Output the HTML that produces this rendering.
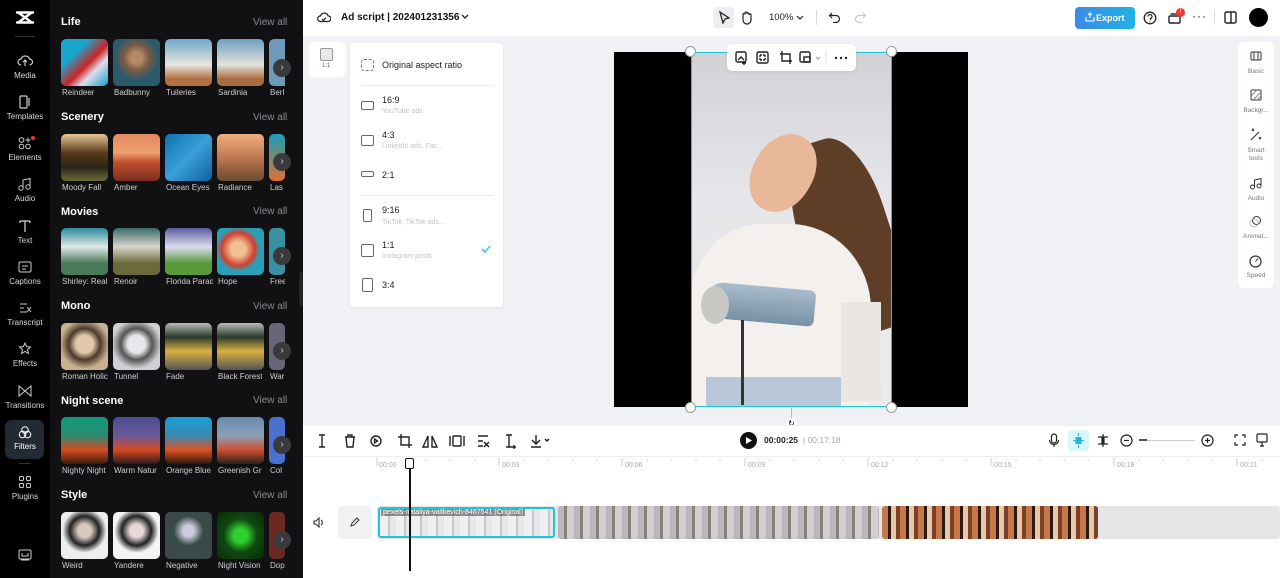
<!DOCTYPE html>
<html><head><meta charset="utf-8"><style>
*{box-sizing:border-box;margin:0;padding:0}
body{width:1280px;height:578px;overflow:hidden;font-family:"Liberation Sans",sans-serif;background:#fff;position:relative}
.abs{position:absolute}
#rail{left:0;top:0;width:50px;height:578px;background:#000}
#panel{left:50px;top:0;width:253px;height:578px;background:#111114}
.ri{position:absolute;left:0;width:50px;text-align:center;color:#d8d8d8;font-size:8px}
.ri svg{display:block;margin:0 auto 3px}
.st{position:absolute;left:61px;color:#fff;font-weight:bold;font-size:11px}
.va{position:absolute;left:253px;color:#8a8a8e;font-size:10px}
.th{position:absolute;width:47px;height:47px;border-radius:5px;overflow:hidden}
.lb{position:absolute;color:#cfcfd2;font-size:8px;white-space:nowrap;overflow:hidden}
.ar{position:absolute;left:273px;width:18px;height:18px;border-radius:50%;background:#3a3a3e;color:#ccc;font-size:10px;text-align:center;line-height:18px}
#canvas{left:303px;top:36px;width:977px;height:389px;background:#eff1f4}
.ic{stroke:#222;fill:none;stroke-width:1.4}
.dd{position:absolute;left:360px;font-size:9px;color:#222}
.ds{position:absolute;left:382px;font-size:7px;color:#c4c4c8}
.bx{position:absolute;border:1.3px solid #666;border-radius:2px}
.tk{position:absolute;top:462px;font-size:7px;color:#aaa}
.rp{position:absolute;left:1238px;width:36px;text-align:center;font-size:6.5px;color:#777}
</style></head><body>
<div id="rail" class="abs"></div>
<div id="panel" class="abs"></div>
<!-- logo -->
<svg class="abs" style="left:15px;top:10px" width="20" height="16" viewBox="0 0 20 16"><path d="M2 2.5h16M2 12.5h16M4 3l12 9M16 3L4 12" stroke="#fff" stroke-width="2.4" fill="none" stroke-linecap="round"/></svg>
<div class="abs" style="left:15px;top:36px;width:20px;height:1px;background:#333"></div>
<div class="ri" style="top:54px"><svg width="16" height="14"><path d="M4 11a3 3 0 0 1 0-6 4.5 4.5 0 0 1 8.5 0 3 3 0 0 1 0 6M8 12V6M6 8l2-2 2 2" stroke="#ccc" fill="none" stroke-width="1.2"/></svg>Media</div>
<div class="ri" style="top:95px"><svg width="16" height="14"><rect x="3" y="1" width="7" height="12" rx="1" stroke="#ccc" fill="none" stroke-width="1.2"/><path d="M12 3v8" stroke="#ccc" stroke-width="1.2"/></svg>Templates</div>
<div class="ri" style="top:136px"><svg width="16" height="14"><circle cx="4.5" cy="4" r="2.3" stroke="#ccc" fill="none"/><circle cx="4.5" cy="10.5" r="2.3" stroke="#ccc" fill="none"/><circle cx="11" cy="10.5" r="2.3" stroke="#ccc" fill="none"/><path d="M11 1.5v5M8.5 4h5" stroke="#ccc"/></svg>Elements</div>
<div class="abs" style="left:31px;top:136px;width:4px;height:4px;border-radius:50%;background:#f33"></div>
<div class="ri" style="top:177px"><svg width="16" height="14"><circle cx="4" cy="11" r="2.2" stroke="#ccc" fill="none"/><circle cx="11" cy="10" r="2.2" stroke="#ccc" fill="none"/><path d="M6 11V3l7-1.5V10" stroke="#ccc" fill="none"/></svg>Audio</div>
<div class="ri" style="top:219px"><svg width="16" height="14"><path d="M3 2h10M8 2v11M3 2v2M13 2v2" stroke="#ccc" fill="none" stroke-width="1.3"/></svg>Text</div>
<div class="ri" style="top:260px"><svg width="16" height="14"><rect x="2" y="2" width="12" height="10" rx="1.5" stroke="#ccc" fill="none"/><path d="M5 6h6M5 9h4" stroke="#ccc"/></svg>Captions</div>
<div class="ri" style="top:301px"><svg width="16" height="14"><path d="M3 3h7M3 7h4M3 11h7M10 6l4 5M14 6l-4 5" stroke="#ccc" fill="none"/></svg>Transcript</div>
<div class="ri" style="top:342px"><svg width="16" height="14"><path d="M8 1l1.6 3.6 3.9.4-3 2.6.9 3.9L8 9.5 4.6 11.5l.9-3.9-3-2.6 3.9-.4z" stroke="#ccc" fill="none"/></svg>Effects</div>
<div class="ri" style="top:384px"><svg width="16" height="14"><path d="M2 2v10l12-10v10z" stroke="#ccc" fill="none"/></svg>Transitions</div>
<div class="abs" style="left:5px;top:420px;width:39px;height:39px;border-radius:7px;background:#222a33"></div>
<div class="ri" style="top:425px;color:#fff"><svg width="16" height="14"><circle cx="8" cy="5" r="3.3" stroke="#fff" fill="none"/><circle cx="5.5" cy="9.5" r="3.3" stroke="#fff" fill="none"/><circle cx="10.5" cy="9.5" r="3.3" stroke="#fff" fill="none"/></svg>Filters</div>
<div class="abs" style="left:19px;top:463px;width:12px;height:1px;background:#333"></div>
<div class="ri" style="top:475px"><svg width="16" height="14"><rect x="2.5" y="1.5" width="4" height="4" rx="1" stroke="#ccc" fill="none"/><rect x="9.5" y="1.5" width="4" height="4" rx="1" stroke="#ccc" fill="none"/><rect x="2.5" y="8.5" width="4" height="4" rx="1" stroke="#ccc" fill="none"/><rect x="9.5" y="8.5" width="4" height="4" rx="1" stroke="#ccc" fill="none"/></svg>Plugins</div>
<svg class="abs" style="left:18px;top:549px" width="14" height="12"><rect x="1" y="1" width="12" height="9" rx="1.5" stroke="#ccc" fill="none"/><path d="M4 4v3h6V4M3 11h8" stroke="#ccc" fill="none"/></svg>

<!-- sections -->
<div class="st" style="top:16px">Life</div><div class="va" style="top:17px">View all</div>
<div class="st" style="top:111px">Scenery</div><div class="va" style="top:112px">View all</div>
<div class="st" style="top:206px">Movies</div><div class="va" style="top:206px">View all</div>
<div class="st" style="top:300px">Mono</div><div class="va" style="top:301px">View all</div>
<div class="st" style="top:395px">Night scene</div><div class="va" style="top:395px">View all</div>
<div class="st" style="top:489px">Style</div><div class="va" style="top:490px">View all</div>

<!-- row 1 -->
<div class="th" style="left:61px;top:39px;background:linear-gradient(135deg,#1aa6cf 30%,#c22 55%,#dde 70%,#18a0c8)"></div>
<div class="th" style="left:113px;top:39px;background:radial-gradient(circle at 50% 40%,#b48a6a 15%,#7a5a44 35%,#2a5a6c 60%)"></div>
<div class="th" style="left:165px;top:39px;background:linear-gradient(180deg,#6fa8c8,#e8e6e0 55%,#b07040 85%)"></div>
<div class="th" style="left:217px;top:39px;background:linear-gradient(180deg,#6ea0c0,#e4e2dc 55%,#a86c40 85%)"></div>
<div class="th" style="left:269px;top:39px;width:16px;border-radius:5px 0 0 5px;background:#6e9ab8"></div>
<div class="lb" style="left:62px;top:88px">Reindeer</div><div class="lb" style="left:114px;top:88px">Badbunny</div><div class="lb" style="left:166px;top:88px">Tuileries</div><div class="lb" style="left:218px;top:88px">Sardinia</div><div class="lb" style="left:270px;top:88px;width:15px">Berl</div>
<div class="ar" style="top:59px">›</div>
<!-- row 2 -->
<div class="th" style="left:61px;top:134px;background:linear-gradient(180deg,#e8c898,#5a3a1a 40%,#2a2416 70%,#6a6a3a)"></div>
<div class="th" style="left:113px;top:134px;background:linear-gradient(180deg,#e08a60,#f0a070 40%,#c05030 60%,#7a3020)"></div>
<div class="th" style="left:165px;top:134px;background:linear-gradient(135deg,#0e70b0,#3aa0d8 50%,#1060a0)"></div>
<div class="th" style="left:217px;top:134px;background:linear-gradient(180deg,#f0b080,#c07850 50%,#6a4a30)"></div>
<div class="th" style="left:269px;top:134px;width:16px;background:linear-gradient(#18a0b8,#e07030)"></div>
<div class="lb" style="left:62px;top:183px">Moody Fall</div><div class="lb" style="left:114px;top:183px">Amber</div><div class="lb" style="left:166px;top:183px">Ocean Eyes</div><div class="lb" style="left:218px;top:183px">Radiance</div><div class="lb" style="left:270px;top:183px;width:15px">Las</div>
<div class="ar" style="top:153px">›</div>
<!-- row 3 -->
<div class="th" style="left:61px;top:228px;background:linear-gradient(180deg,#2a8a9a,#e0e8e8 40%,#4a7a5a 75%)"></div>
<div class="th" style="left:113px;top:228px;background:linear-gradient(180deg,#3a6a6a,#d8d4c8 40%,#6a6a3a 75%)"></div>
<div class="th" style="left:165px;top:228px;background:linear-gradient(180deg,#5a5aa0,#dcdcf0 40%,#5a9a3a 75%)"></div>
<div class="th" style="left:217px;top:228px;background:radial-gradient(circle at 45% 45%,#f0c090 20%,#d04030 45%,#2aa0b8 60%)"></div>
<div class="th" style="left:269px;top:228px;width:16px;background:#3a90a0"></div>
<div class="lb" style="left:62px;top:277px;width:47px">Shirley: Real</div><div class="lb" style="left:114px;top:277px">Renoir</div><div class="lb" style="left:166px;top:277px;width:47px">Florida Parad</div><div class="lb" style="left:218px;top:277px">Hope</div><div class="lb" style="left:270px;top:277px;width:15px">Free</div>
<div class="ar" style="top:247px">›</div>
<!-- row 4 -->
<div class="th" style="left:61px;top:323px;background:radial-gradient(circle at 50% 45%,#e0c8a8 25%,#4a3a2a 45%,#c8b090 70%)"></div>
<div class="th" style="left:113px;top:323px;background:radial-gradient(circle at 50% 45%,#e8e8ec 25%,#555 45%,#d0d0d4 70%)"></div>
<div class="th" style="left:165px;top:323px;background:linear-gradient(180deg,#bbb,#2a3a2a 30%,#d8b040 60%,#555)"></div>
<div class="th" style="left:217px;top:323px;background:linear-gradient(180deg,#bbb,#2a3a2a 30%,#d8b040 60%,#555)"></div>
<div class="th" style="left:269px;top:323px;width:16px;background:#667"></div>
<div class="lb" style="left:62px;top:372px;width:47px">Roman Holic</div><div class="lb" style="left:114px;top:372px">Tunnel</div><div class="lb" style="left:166px;top:372px">Fade</div><div class="lb" style="left:218px;top:372px">Black Forest</div><div class="lb" style="left:270px;top:372px;width:15px">War</div>
<div class="ar" style="top:342px">›</div>
<!-- row 5 -->
<div class="th" style="left:61px;top:417px;background:linear-gradient(180deg,#109a80,#2a8a70 40%,#d84a20 70%,#3a1a10)"></div>
<div class="th" style="left:113px;top:417px;background:linear-gradient(180deg,#4a4a90,#6a5a9a 40%,#d84a20 70%,#2a1a20)"></div>
<div class="th" style="left:165px;top:417px;background:linear-gradient(180deg,#18a0d8,#3a8ab0 40%,#e05020 70%,#2a1a10)"></div>
<div class="th" style="left:217px;top:417px;background:linear-gradient(180deg,#6a8ab0,#8aa0b8 40%,#d05030 70%,#2a2020)"></div>
<div class="th" style="left:269px;top:417px;width:16px;background:#4a70d0"></div>
<div class="lb" style="left:62px;top:466px;width:47px">Nighty Night</div><div class="lb" style="left:114px;top:466px;width:47px">Warm Natur</div><div class="lb" style="left:166px;top:466px;width:47px">Orange Blue</div><div class="lb" style="left:218px;top:466px;width:47px">Greenish Gr</div><div class="lb" style="left:270px;top:466px;width:15px">Col</div>
<div class="ar" style="top:436px">›</div>
<!-- row 6 -->
<div class="th" style="left:61px;top:512px;background:radial-gradient(circle at 50% 40%,#d8c8c0 18%,#222 40%,#eee 60%)"></div>
<div class="th" style="left:113px;top:512px;background:radial-gradient(circle at 50% 40%,#e8d8d8 18%,#222 40%,#f4f4f4 60%)"></div>
<div class="th" style="left:165px;top:512px;background:radial-gradient(circle at 50% 40%,#ccd 15%,#3a4a48 40%)"></div>
<div class="th" style="left:217px;top:512px;background:radial-gradient(circle at 50% 50%,#30d030 20%,#104a10 50%,#0a2a0a)"></div>
<div class="th" style="left:269px;top:512px;width:16px;background:#6a2a20"></div>
<div class="lb" style="left:62px;top:561px">Weird</div><div class="lb" style="left:114px;top:561px">Yandere</div><div class="lb" style="left:166px;top:561px">Negative</div><div class="lb" style="left:218px;top:561px">Night Vision</div><div class="lb" style="left:270px;top:561px;width:15px">Dop</div>
<div class="ar" style="top:531px">›</div>
<div class="abs" style="left:299px;top:272px;width:8px;height:34px;background:#222;border-radius:3px"></div>

<!-- top bar -->
<svg class="abs" style="left:317px;top:11px" width="14" height="12"><path d="M3.5 10.5a2.8 2.8 0 0 1 0-5.6 4 4 0 0 1 7.6 0 2.8 2.8 0 0 1 0 5.6z M5 8l1.5 1.5L9 6.5" stroke="#222" fill="none" stroke-width="1.2"/></svg>
<div class="abs" style="left:341px;top:12px;font-size:10px;font-weight:bold;color:#111">Ad script | 202401231356</div>
<svg class="abs" style="left:461px;top:14px" width="8" height="6"><path d="M1 1l3 3 3-3" stroke="#222" fill="none" stroke-width="1.3"/></svg>
<div class="abs" style="left:713px;top:7px;width:21px;height:21px;border-radius:4px;background:#eceef1"></div>
<svg class="abs" style="left:718px;top:11px" width="12" height="13"><path d="M2 1l9 6-4 1-2 4z" stroke="#222" fill="none" stroke-width="1.3"/></svg>
<svg class="abs" style="left:740px;top:10px" width="13" height="15"><path d="M3 8V4.5a1 1 0 0 1 2 0V3a1 1 0 0 1 2 0v1a1 1 0 0 1 2 0v1a1 1 0 0 1 2 0v5a4 4 0 0 1-4 4H7a4 4 0 0 1-4-4z" stroke="#222" fill="none" stroke-width="1.2"/></svg>
<div class="abs" style="left:769px;top:12px;font-size:9.5px;color:#222">100%</div>
<svg class="abs" style="left:796px;top:15px" width="8" height="6"><path d="M1 1l3 3 3-3" stroke="#222" fill="none" stroke-width="1.2"/></svg>
<div class="abs" style="left:816px;top:10px;width:1px;height:15px;background:#ddd"></div>
<svg class="abs" style="left:828px;top:11px" width="13" height="12"><path d="M4 2L1.5 4.5 4 7M1.5 4.5H8a3.5 3.5 0 0 1 0 7H5" stroke="#222" fill="none" stroke-width="1.2"/></svg>
<svg class="abs" style="left:854px;top:11px" width="13" height="12"><path d="M9 2l2.5 2.5L9 7M11.5 4.5H5a3.5 3.5 0 0 0 0 7h3" stroke="#ccc" fill="none" stroke-width="1.2"/></svg>
<div class="abs" style="left:1075px;top:7px;width:60px;height:22px;border-radius:4px;background:linear-gradient(90deg,#3a8ae8,#1fb2e6);color:#fff;font-size:9px;font-weight:bold;line-height:22px;padding-left:21px">Export</div>
<svg class="abs" style="left:1085px;top:12px" width="10" height="10"><path d="M5 1v5M3 3l2-2 2 2M1 5v4h8V5" stroke="#fff" fill="none" stroke-width="1.1"/></svg>
<svg class="abs" style="left:1143px;top:11px" width="14" height="14"><circle cx="7" cy="7" r="5.8" stroke="#222" fill="none" stroke-width="1.3"/><path d="M5 5.5a2 2 0 1 1 2.5 2V9M7 10.5v.7" stroke="#222" fill="none" stroke-width="1.2"/></svg>
<svg class="abs" style="left:1168px;top:12px" width="13" height="12"><rect x="1" y="4" width="11" height="7" rx="1" stroke="#222" fill="none" stroke-width="1.4"/><path d="M2.5 2h8" stroke="#222" stroke-width="1.4"/></svg>
<div class="abs" style="left:1176px;top:8px;width:9px;height:9px;border-radius:50%;background:#f33;color:#fff;font-size:6px;text-align:center;line-height:9px">!</div>
<div class="abs" style="left:1192px;top:9px;font-size:12px;color:#222;letter-spacing:1px">···</div>
<div class="abs" style="left:1214px;top:10px;width:1px;height:15px;background:#ddd"></div>
<svg class="abs" style="left:1224px;top:11px" width="13" height="13"><rect x="1" y="1" width="11" height="11" rx="1.5" stroke="#222" fill="none" stroke-width="1.4"/><path d="M7 1v11" stroke="#222" stroke-width="1.4"/></svg>
<div class="abs" style="left:1249px;top:8px;width:19px;height:19px;border-radius:50%;background:#000"></div>

<!-- canvas -->
<div id="canvas" class="abs"></div>
<div class="abs" style="left:309px;top:42px;width:36px;height:35px;border-radius:6px;background:#fff;box-shadow:0 0 0 2px #f4f5f7"></div>
<div class="abs" style="left:320px;top:48px;width:13px;height:13px;border:1px solid #999;border-radius:2px;background:#e8e8ea"></div>
<div class="abs" style="left:322px;top:63px;font-size:6px;color:#666">1:1</div>
<div class="abs" style="left:350px;top:43px;width:153px;height:264px;border-radius:4px;background:#fff;box-shadow:0 1px 4px rgba(0,0,0,.06)"></div>
<div class="abs" style="left:361px;top:59px;width:13px;height:12px;border:1.2px dashed #777;border-radius:3px"></div>
<div class="dd" style="top:60px;left:382px">Original aspect ratio</div>
<div class="abs" style="left:361px;top:85px;width:132px;height:1px;background:#ececec"></div>
<div class="bx" style="left:361px;top:101px;width:13px;height:9px"></div>
<div class="dd" style="top:95px;left:382px">16:9</div><div class="ds" style="top:108px">YouTube ads</div>
<div class="bx" style="left:361px;top:135px;width:13px;height:11px"></div>
<div class="dd" style="top:130px;left:382px">4:3</div><div class="ds" style="top:143px">LinkedIn ads, Fac...</div>
<div class="bx" style="left:361px;top:171px;width:13px;height:6px"></div>
<div class="dd" style="top:170px;left:382px">2:1</div>
<div class="abs" style="left:361px;top:195px;width:132px;height:1px;background:#ececec"></div>
<div class="bx" style="left:363px;top:209px;width:9px;height:13px"></div>
<div class="dd" style="top:205px;left:382px">9:16</div><div class="ds" style="top:219px">TikTok, TikTok ads...</div>
<div class="bx" style="left:361px;top:244px;width:13px;height:13px"></div>
<div class="dd" style="top:240px;left:382px">1:1</div><div class="ds" style="top:253px">Instagram posts</div>
<svg class="abs" style="left:481px;top:245px" width="10" height="8"><path d="M1 4l3 3 5-6" stroke="#2bb5d8" fill="none" stroke-width="1.3"/></svg>
<div class="bx" style="left:362px;top:278px;width:11px;height:14px"></div>
<div class="dd" style="top:280px;left:382px">3:4</div>

<div class="abs" style="left:614px;top:52px;width:354px;height:355px;background:#000"></div>
<div class="abs" style="left:691px;top:52px;width:201px;height:355px;overflow:hidden;background:linear-gradient(180deg,#d2d2d6,#e6e6ea 40%,#ececee)">
 <div class="abs" style="left:110px;top:85px;width:90px;height:200px;border-radius:45% 40% 30% 40%;background:#5e3e26;transform:rotate(-18deg)"></div>
 <div class="abs" style="left:62px;top:80px;width:60px;height:82px;border-radius:48%;background:#e8b898;transform:rotate(30deg)"></div>
 <div class="abs" style="left:0px;top:172px;width:180px;height:190px;border-radius:40% 45% 10% 10%;background:#f4f0ee"></div>
 <div class="abs" style="left:150px;top:250px;width:40px;height:100px;background:#eae6e4"></div>
 <div class="abs" style="left:15px;top:325px;width:135px;height:35px;background:#b8c8d8"></div>
 <div class="abs" style="left:14px;top:234px;width:110px;height:36px;border-radius:18px 6px 6px 18px;background:linear-gradient(180deg,#a8bccc,#7890a4);transform:rotate(5deg)"></div>
 <div class="abs" style="left:10px;top:234px;width:28px;height:38px;border-radius:50%;background:#c8c8c4"></div>
 <div class="abs" style="left:50px;top:268px;width:3px;height:85px;background:#333"></div>
</div>
<div class="abs" style="left:691px;top:52px;width:201px;height:355px;border:1.5px solid #1cc5d8"></div>
<div class="abs" style="left:685px;top:46px;width:11px;height:11px;border-radius:50%;background:#fff;border:1px solid #999"></div>
<div class="abs" style="left:886px;top:46px;width:11px;height:11px;border-radius:50%;background:#fff;border:1px solid #999"></div>
<div class="abs" style="left:685px;top:402px;width:11px;height:11px;border-radius:50%;background:#fff;border:1px solid #999"></div>
<div class="abs" style="left:886px;top:402px;width:11px;height:11px;border-radius:50%;background:#fff;border:1px solid #999"></div>
<div class="abs" style="left:791px;top:408px;width:1px;height:10px;background:#bbb"></div>
<div class="abs" style="left:786px;top:418px;width:11px;height:11px;border-radius:50%;background:#fff;font-size:8px;text-align:center;line-height:11px">↻</div>
<div class="abs" style="left:727px;top:44px;width:129px;height:27px;border-radius:5px;background:#fff;box-shadow:0 1px 3px rgba(0,0,0,.08)"></div>
<svg class="abs" style="left:735px;top:51px" width="120" height="14">
<g class="ic"><rect x="1" y="1" width="10" height="10" rx="1.5"/><path d="M3 9l3-3 3 3M9 10v4M7 12h4"/>
<rect x="22" y="1" width="11" height="11" rx="1.5"/><path d="M25 4h2M25 4v2M30 4h-2M30 4v2M25 9v-2M25 9h2M30 9h-2M30 9v-2"/>
<path d="M47 0v10h10M45 3h10v10"/>
<rect x="65" y="1" width="10" height="10" rx="1.5"/><rect x="69" y="6" width="6" height="5"/><path d="M81 6l2 2 2-2" stroke="#aaa"/>
<path d="M91 0v13" stroke="#e6e6e6"/></g>
<circle cx="101" cy="7" r="1.2" fill="#222"/><circle cx="106" cy="7" r="1.2" fill="#222"/><circle cx="111" cy="7" r="1.2" fill="#222"/></svg>

<!-- right panel -->
<div class="abs" style="left:1238px;top:42px;width:36px;height:246px;border-radius:6px;background:#fff"></div>
<svg class="abs" style="left:1250px;top:50px" width="12" height="12"><rect x="1" y="2" width="10" height="8" rx="1" stroke="#333" fill="none"/><path d="M4 2v8M8 2v8" stroke="#333"/></svg>
<div class="rp" style="top:68px">Basic</div>
<svg class="abs" style="left:1250px;top:89px" width="12" height="12"><rect x="1" y="1" width="10" height="10" rx="1" stroke="#333" fill="none"/><path d="M1 7l6-6M3 11l8-8M7 11l4-4" stroke="#888"/></svg>
<div class="rp" style="top:107px">Backgr...</div>
<svg class="abs" style="left:1249px;top:128px" width="13" height="13"><path d="M2 12l8-8M3 3l1-2 1 2M10 9l1 2 1-2" stroke="#333" fill="none" stroke-width="1.1"/></svg>
<div class="rp" style="top:147px;line-height:8px">Smart<br>tools</div>
<svg class="abs" style="left:1249px;top:177px" width="13" height="13"><circle cx="3.5" cy="10" r="2" stroke="#333" fill="none"/><circle cx="10" cy="9" r="2" stroke="#333" fill="none"/><path d="M5.5 10V3L12 1.5V9" stroke="#333" fill="none"/></svg>
<div class="rp" style="top:195px">Audio</div>
<svg class="abs" style="left:1249px;top:215px" width="13" height="13"><circle cx="7.5" cy="5.5" r="4" stroke="#333" fill="none"/><circle cx="5" cy="8" r="4" stroke="#bbb" fill="none"/></svg>
<div class="rp" style="top:233px">Animat...</div>
<svg class="abs" style="left:1249px;top:255px" width="13" height="13"><circle cx="6.5" cy="6.5" r="5.5" stroke="#333" fill="none" stroke-width="1.2"/><path d="M6.5 6.5l2.5-3" stroke="#333"/></svg>
<div class="rp" style="top:272px">Speed</div>

<!-- toolbar -->
<div class="abs" style="left:303px;top:425px;width:977px;height:1px;background:#f0f0f0"></div>
<svg class="abs" style="left:316px;top:433px" width="240" height="16"><g class="ic" stroke-width="1.2">
<path d="M3 2h6M3 14h6M6 2v12"/>
<path d="M29 4h10M32 4V2h4v2M30 4l1 10h6l1-10"/>
<circle cx="60" cy="8" r="5"/><path d="M58.5 6l3 2-3 2z"/>
<path d="M85 1v11h11M82 4h11v11"/>
<path d="M112 3l-5 11h5zM116 3l5 11h-5z"/>
<rect x="137" y="3" width="8" height="10" rx="1"/><path d="M134 3v10M148 3v10"/>
<path d="M162 3h10M162 8h5M162 13h5M168 9l5 5M173 9l-5 5"/>
<path d="M190 2h6M190 14h6M193 2v12M198 12v4M196 14h4"/>
<path d="M220 2v9M216 7l4 4 4-4M215 14h10M229 6l2 2 2-2"/></g></svg>
<div class="abs" style="left:740px;top:432px;width:17px;height:17px;border-radius:50%;background:#111"></div>
<svg class="abs" style="left:746px;top:437px" width="6" height="7"><path d="M0 0l6 3.5L0 7z" fill="#fff"/></svg>
<div class="abs" style="left:764px;top:435px;font-size:8.5px;font-weight:bold;color:#222">00:00:25</div>
<div class="abs" style="left:803px;top:435px;font-size:8.5px;color:#aaa">| 00:17:18</div>
<svg class="abs" style="left:1048px;top:433px" width="12" height="15"><rect x="3.5" y="1" width="5" height="9" rx="2.5" stroke="#222" fill="none" stroke-width="1.2"/><path d="M1.5 7a4.5 4.5 0 0 0 9 0M6 11.5V14" stroke="#222" fill="none" stroke-width="1.2"/></svg>
<div class="abs" style="left:1068px;top:430px;width:21px;height:21px;border-radius:4px;background:#d9f6fb"></div>
<svg class="abs" style="left:1072px;top:433px" width="13" height="15"><rect x="3.5" y="4" width="6" height="7" fill="#1cb8d8"/><path d="M6.5 0v3M6.5 12v3M1 7.5h11" stroke="#1cb8d8"/></svg>
<svg class="abs" style="left:1096px;top:433px" width="14" height="15"><path d="M7 1v13M2 4h4v7H2M12 4H8v7h4" stroke="#222" fill="none" stroke-width="1.2"/></svg>
<svg class="abs" style="left:1120px;top:434px" width="13" height="13"><circle cx="6.5" cy="6.5" r="5.5" stroke="#222" fill="none" stroke-width="1.2"/><path d="M4 6.5h5" stroke="#222" stroke-width="1.2"/></svg>
<div class="abs" style="left:1139px;top:440px;width:56px;height:1px;background:#ccc"></div>
<div class="abs" style="left:1139px;top:439px;width:8px;height:2px;background:#555"></div>
<svg class="abs" style="left:1201px;top:434px" width="13" height="13"><circle cx="6.5" cy="6.5" r="5.5" stroke="#222" fill="none" stroke-width="1.2"/><path d="M4 6.5h5M6.5 4v5" stroke="#222" stroke-width="1.2"/></svg>
<svg class="abs" style="left:1234px;top:434px" width="12" height="12"><path d="M1 4V1h3M8 1h3v3M11 8v3H8M4 11H1V8" stroke="#222" fill="none" stroke-width="1.2"/></svg>
<svg class="abs" style="left:1256px;top:433px" width="12" height="14"><rect x="1" y="1" width="10" height="8" rx="1" stroke="#222" fill="none" stroke-width="1.2"/><path d="M6 9v4M4 13h4" stroke="#222" stroke-width="1.2"/></svg>
<div class="abs" style="left:303px;top:456px;width:977px;height:1px;background:#eee"></div>

<!-- ruler -->
<svg class="abs" style="left:376px;top:458px" width="904" height="8"><g stroke="#ccc"><path d="M1 0v8M123 0v8M246 0v8M369 0v8M492 0v8M615 0v8M738 0v8M861 0v8"/></g>
<g stroke="#ddd"><path d="M25 1v3M50 1v3M74 1v3M99 1v3M148 1v3M172 1v3M197 1v3M221 1v3M271 1v3M295 1v3M320 1v3M344 1v3M394 1v3M418 1v3M443 1v3M467 1v3M517 1v3M541 1v3M566 1v3M590 1v3M640 1v3M664 1v3M689 1v3M713 1v3M763 1v3M787 1v3M812 1v3M836 1v3M886 1v3"/></g></svg>
<div class="tk" style="left:379px">00:00</div><div class="tk" style="left:502px">00:03</div><div class="tk" style="left:625px">00:06</div><div class="tk" style="left:748px">00:09</div><div class="tk" style="left:871px">00:12</div><div class="tk" style="left:994px">00:15</div><div class="tk" style="left:1117px">00:18</div><div class="tk" style="left:1240px">00:21</div>

<!-- track -->
<svg class="abs" style="left:313px;top:517px" width="11" height="11"><path d="M1 4h2l3-3v9l-3-3H1zM8 3a3 3 0 0 1 0 5" stroke="#333" fill="none" stroke-width="1.1"/></svg>
<div class="abs" style="left:338px;top:506px;width:34px;height:33px;border-radius:4px;background:#eff1f3"></div>
<svg class="abs" style="left:350px;top:517px" width="10" height="10"><path d="M1 9l1-3 5-5 2 2-5 5z" stroke="#333" fill="none"/></svg>
<div class="abs" style="left:377px;top:506px;width:903px;height:33px;background:#e4e5e7;border-radius:3px"></div>
<div class="abs" style="left:378px;top:507px;width:177px;height:31px;border-radius:3px;background:repeating-linear-gradient(90deg,#f0f0f2 0 8px,#c8c8cc 8px 10px,#e8e8ea 10px 16px);border:2px solid #1cc5d8"></div>
<div class="abs" style="left:381px;top:509px;font-size:7px;color:#fff;background:rgba(60,60,60,.55);padding:0 2px;white-space:nowrap">pexels-nataliya-vaitkevich-8467541 (Original)</div>
<div class="abs" style="left:558px;top:506px;width:321px;height:33px;border-radius:3px;background:repeating-linear-gradient(90deg,#b8b8bc 0 6px,#8a8078 6px 9px,#d0d0d4 9px 16px)"></div>
<div class="abs" style="left:882px;top:506px;width:216px;height:33px;border-radius:3px;background:repeating-linear-gradient(90deg,#c87848 0 6px,#2a1a14 6px 9px,#e8c8a8 9px 14px,#7a4028 14px 18px)"></div>
<!-- playhead -->
<div class="abs" style="left:409px;top:466px;width:1.5px;height:105px;background:#111"></div>
<div class="abs" style="left:405px;top:458px;width:9px;height:11px;border:1.5px solid #111;border-radius:2px;background:#fff"></div>
</body></html>
